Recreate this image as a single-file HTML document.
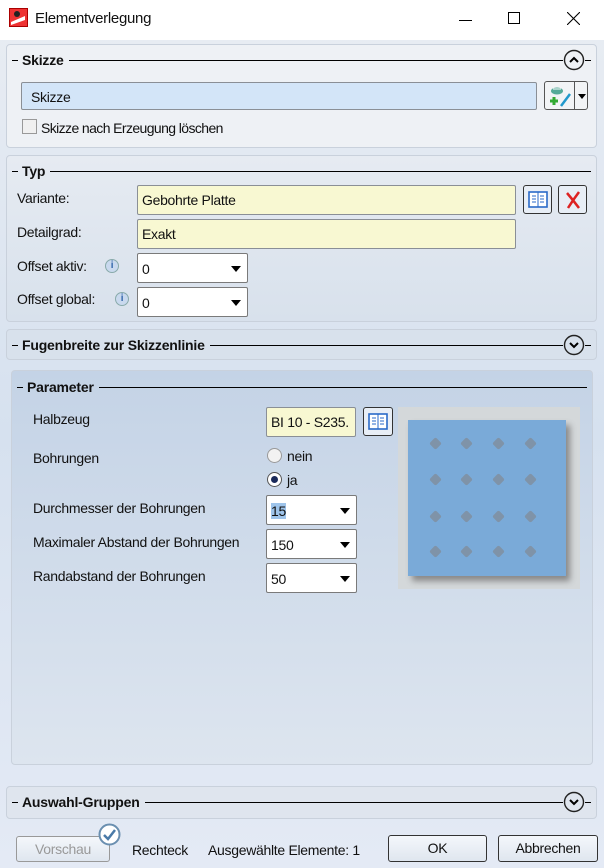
<!DOCTYPE html>
<html><head><meta charset="utf-8"><style>
*{box-sizing:border-box;margin:0;padding:0}
body{width:604px;height:868px;position:relative;overflow:hidden;font-family:"Liberation Sans",sans-serif;font-size:14px;letter-spacing:-0.3px;color:#111;background:linear-gradient(#e9edf3,#d6e1ef 50%,#e4eaf5);}
.a{position:absolute}
.title{left:0;top:0;width:604px;height:40px;background:#fff}
.panel{position:absolute;border:1px solid #c9d1dc;border-radius:4px}
.hdr{position:absolute;display:flex;align-items:center;height:20px}
.hdr b{font-size:14px;padding:0 5px 0 4px;letter-spacing:-0.2px}
.hdr i{display:block;height:1px;background:#000}
.hdr .f{flex:1}
.inp{position:absolute;border:1px solid #8a8f96;border-radius:2px;padding-left:4px;line-height:29px;height:30px}
.yel{background:#f8f8d2}
.sel{position:absolute;background:#fff;border:1px solid #7a7a7a;border-radius:2px;padding-left:4px;height:30px;line-height:30px}
.sel:after{content:"";position:absolute;right:6px;top:12px;border:5px solid transparent;border-top:6px solid #000;border-bottom:0}
.btn{position:absolute;border:1px solid #555;border-radius:3px;background:linear-gradient(#f4f7fb,#dfe6ef);text-align:center;line-height:24px}
.dot{position:absolute;width:9px;height:9px;background:#7f93a8;transform:rotate(45deg);border-radius:2px}
.ib{position:absolute;width:29px;height:29px;border:1px solid #333;border-radius:3px;background:#e8eef6}
</style></head><body>
<svg width="0" height="0" style="position:absolute"><defs>
<g id="book"><rect x="5" y="6" width="18" height="15" fill="#fff" stroke="#2a6ac8" stroke-width="1.6"/><line x1="14" y1="6" x2="14" y2="21" stroke="#2a6ac8"/><path d="M8 10h4M8 13h4M8 16h4M16 10h4M16 13h4M16 16h4" stroke="#2a6ac8"/></g>
</defs></svg>
<div class="a title">
 <svg class="a" style="left:9px;top:8px" width="19" height="19"><rect x="0.5" y="0.5" width="18" height="18" fill="#e33" stroke="#a00"/><path d="M2 14 L16 8 L16 12 L2 17Z" fill="#fff"/><circle cx="8" cy="6" r="3" fill="#222"/></svg>
 <div class="a" style="left:35px;top:10px;font-size:15px;letter-spacing:-0.3px">Elementverlegung</div>
 <div class="a" style="left:459px;top:20px;width:13px;height:1px;background:#000"></div>
 <div class="a" style="left:508px;top:12px;width:12px;height:12px;border:1px solid #000"></div>
 <svg class="a" style="left:567px;top:12px" width="13" height="13"><path d="M0 0L13 13M13 0L0 13" stroke="#000" stroke-width="1.1"/></svg>
</div>

<div class="panel" style="left:6px;top:44px;width:591px;height:104px;background:#eef1f5"></div>
<div class="hdr" style="left:12px;top:50px;width:579px"><i style="width:6px"></i><b>Skizze</b><i class="f"></i>
<svg width="22" height="22"><circle cx="11" cy="11" r="9.5" fill="#eef1f5" stroke="#222" stroke-width="1.4"/><path d="M7 13L11 9L15 13" fill="none" stroke="#000" stroke-width="2"/></svg><i style="width:6px"></i></div>
<div class="inp" style="left:21px;top:82px;width:516px;background:#d3e5f8;line-height:28px;height:28px;padding-left:9px">Skizze</div>
<div class="a" style="left:544px;top:81px;width:44px;height:29px;border:1px solid #555;border-radius:3px;background:#f2f4f6">
 <svg class="a" style="left:2px;top:2px" width="26" height="24"><ellipse cx="10" cy="7" rx="6" ry="3.5" fill="#5a9"/><path d="M6 5h8" stroke="#fff"/><path d="M7 13v8M3 17h8" stroke="#3a3" stroke-width="3"/><path d="M14 22L23 10" stroke="#29c" stroke-width="2.5"/></svg>
 <div class="a" style="left:29px;top:0;width:1px;height:27px;background:#555"></div>
 <div class="a" style="left:33px;top:12px;border:4px solid transparent;border-top:5px solid #000;border-bottom:0"></div>
</div>
<div class="a" style="left:22px;top:119px;width:15px;height:15px;border:1px solid #999;background:#f0f0f0"></div>
<div class="a" style="left:41px;top:120px;letter-spacing:-0.6px">Skizze nach Erzeugung löschen</div>

<div class="panel" style="left:6px;top:155px;width:591px;height:167px;background:linear-gradient(#e6ebf2,#d8e1ec)"></div>
<div class="hdr" style="left:12px;top:161px;width:579px"><i style="width:6px"></i><b>Typ</b><i class="f"></i></div>
<div class="a" style="left:17px;top:190px">Variante:</div>
<div class="inp yel" style="left:137px;top:185px;width:379px">Gebohrte Platte</div>
<div class="ib" style="left:523px;top:185px"><svg width="28" height="28"><use href="#book"/></svg></div>
<div class="ib" style="left:558px;top:185px"><svg width="28" height="28"><path d="M8 7Q14 14 20 22M20 6Q14 14 9 22" stroke="#d22" stroke-width="2.5" fill="none"/></svg></div>
<div class="a" style="left:17px;top:224px">Detailgrad:</div>
<div class="inp yel" style="left:137px;top:219px;width:379px">Exakt</div>
<div class="a" style="left:17px;top:258px">Offset aktiv:</div>
<div class="a" style="left:105px;top:259px;width:14px;height:14px;border-radius:50%;background:#c9d9ee;border:1px solid #8aa;font-size:10px;text-align:center;line-height:12px;color:#36a;font-weight:bold">i</div>
<div class="sel" style="left:137px;top:253px;width:111px">0</div>
<div class="a" style="left:17px;top:291px">Offset global:</div>
<div class="a" style="left:115px;top:292px;width:14px;height:14px;border-radius:50%;background:#c9d9ee;border:1px solid #8aa;font-size:10px;text-align:center;line-height:12px;color:#36a;font-weight:bold">i</div>
<div class="sel" style="left:137px;top:287px;width:111px">0</div>

<div class="panel" style="left:6px;top:329px;width:591px;height:31px;background:#d8e1ec"></div>
<div class="hdr" style="left:12px;top:335px;width:579px"><i style="width:6px"></i><b>Fugenbreite zur Skizzenlinie</b><i class="f"></i>
<svg width="22" height="22"><circle cx="11" cy="11" r="9.5" fill="#d8e1ec" stroke="#222" stroke-width="1.4"/><path d="M7 9L11 13L15 9" fill="none" stroke="#000" stroke-width="2"/></svg><i style="width:6px"></i></div>

<div class="panel" style="left:11px;top:370px;width:582px;height:395px;background:linear-gradient(#c4d3e6,#dde5ef)"></div>
<div class="hdr" style="left:17px;top:377px;width:570px"><i style="width:6px"></i><b>Parameter</b><i class="f"></i></div>
<div class="a" style="left:33px;top:411px">Halbzeug</div>
<div class="inp yel" style="left:266px;top:407px;width:90px;overflow:hidden;white-space:nowrap;padding-left:4px">BI 10 - S235.</div>
<div class="ib" style="left:363px;top:407px;width:30px"><svg width="28" height="28"><use href="#book"/></svg></div>
<div class="a" style="left:33px;top:450px">Bohrungen</div>
<div class="a" style="left:267px;top:448px;width:15px;height:15px;border-radius:50%;border:1px solid #999;background:#f2f2f2"></div>
<div class="a" style="left:287px;top:448px">nein</div>
<div class="a" style="left:267px;top:472px;width:15px;height:15px;border-radius:50%;border:1px solid #555;background:#fff"><div class="a" style="left:3px;top:3px;width:7px;height:7px;border-radius:50%;background:#1a2a5a"></div></div>
<div class="a" style="left:287px;top:472px">ja</div>
<div class="a" style="left:33px;top:500px">Durchmesser der Bohrungen</div>
<div class="sel" style="left:266px;top:495px;width:91px"><span style="background:#9ec4ea">15</span></div>
<div class="a" style="left:33px;top:534px">Maximaler Abstand der Bohrungen</div>
<div class="sel" style="left:266px;top:529px;width:91px">150</div>
<div class="a" style="left:33px;top:568px">Randabstand der Bohrungen</div>
<div class="sel" style="left:266px;top:563px;width:91px">50</div>
<div class="a" style="left:398px;top:407px;width:182px;height:182px;background:#d4d8da"></div>
<div class="a" style="left:408px;top:420px;width:158px;height:156px;background:#7aaad8;box-shadow:4px 5px 6px #888"></div>
<div class="dot" style="left:431px;top:439px"></div><div class="dot" style="left:462px;top:439px"></div><div class="dot" style="left:494px;top:439px"></div><div class="dot" style="left:526px;top:439px"></div>
<div class="dot" style="left:431px;top:475px"></div><div class="dot" style="left:462px;top:475px"></div><div class="dot" style="left:494px;top:475px"></div><div class="dot" style="left:526px;top:475px"></div>
<div class="dot" style="left:431px;top:512px"></div><div class="dot" style="left:462px;top:512px"></div><div class="dot" style="left:494px;top:512px"></div><div class="dot" style="left:526px;top:512px"></div>
<div class="dot" style="left:431px;top:547px"></div><div class="dot" style="left:462px;top:547px"></div><div class="dot" style="left:494px;top:547px"></div><div class="dot" style="left:526px;top:547px"></div>

<div class="panel" style="left:6px;top:786px;width:591px;height:33px;background:#dfe5ee"></div>
<div class="hdr" style="left:12px;top:792px;width:579px"><i style="width:6px"></i><b>Auswahl-Gruppen</b><i class="f"></i>
<svg width="22" height="22"><circle cx="11" cy="11" r="9.5" fill="#dfe5ee" stroke="#222" stroke-width="1.4"/><path d="M7 9L11 13L15 9" fill="none" stroke="#000" stroke-width="2"/></svg><i style="width:6px"></i></div>

<div class="btn" style="left:16px;top:836px;width:94px;height:26px;color:#999;border-color:#999">Vorschau</div>
<svg class="a" style="left:98px;top:823px" width="23" height="23"><circle cx="11.5" cy="11.5" r="10" fill="#fff" stroke="#6a8fb0" stroke-width="2"/><path d="M6 12L10 16L17 7" fill="none" stroke="#4a7aa8" stroke-width="2.5"/></svg>
<div class="a" style="left:132px;top:842px">Rechteck</div>
<div class="a" style="left:208px;top:842px">Ausgewählte Elemente: 1</div>
<div class="btn" style="left:388px;top:835px;width:99px;height:27px;border-color:#333">OK</div>
<div class="btn" style="left:498px;top:835px;width:100px;height:27px;border-color:#333">Abbrechen</div>
</body></html>
